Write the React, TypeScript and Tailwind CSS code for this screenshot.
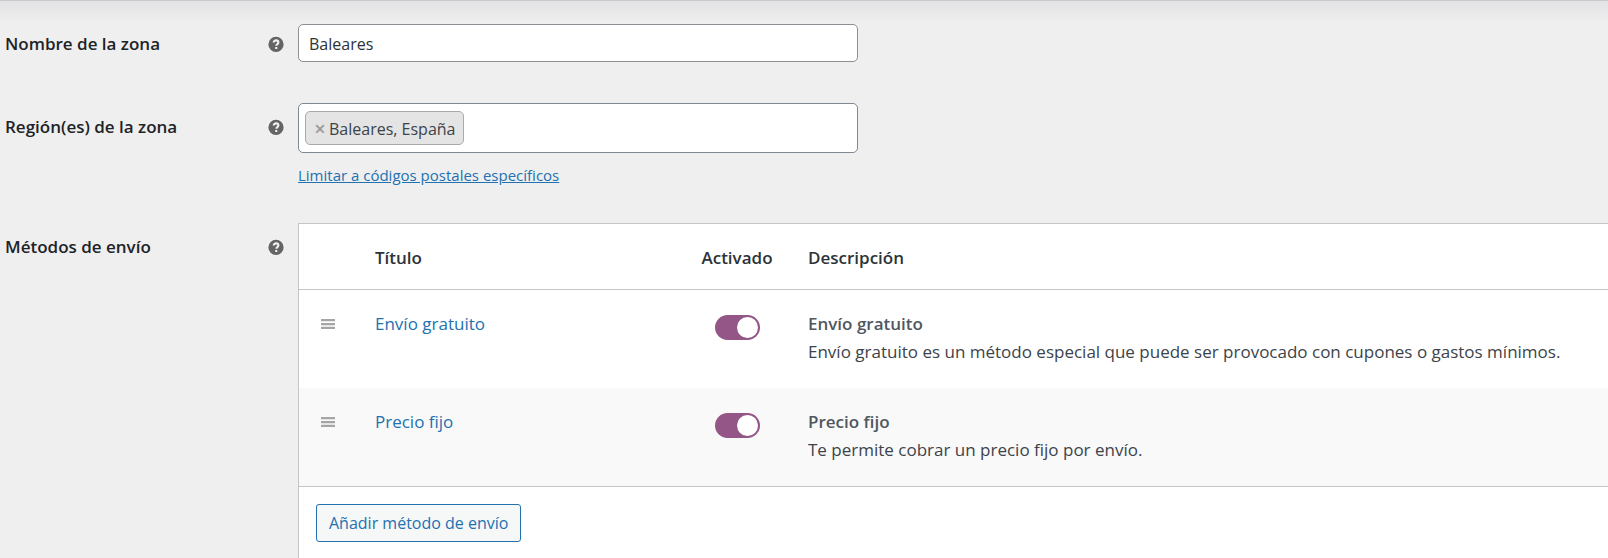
import { useState, type ReactNode } from "react";

const methods = [
  {
    id: "free_shipping",
    title: "Envío gratuito",
    description: "Envío gratuito es un método especial que puede ser provocado con cupones o gastos mínimos.",
  },
  {
    id: "flat_rate",
    title: "Precio fijo",
    description: "Te permite cobrar un precio fijo por envío.",
  },
];

function HelpIcon() {
  return (
    <svg viewBox="0 0 16 16" className="size-4 shrink-0" role="img" aria-label="Ayuda">
      <circle cx="8" cy="8.4" r="7.6" fill="#646464" />
      <path d="M5.7 6.6c0-1.4 1-2.2 2.4-2.2s2.3.8 2.3 2c0 1.7-2.1 1.6-2.1 3.3" fill="none" stroke="#f0f0f1" strokeWidth="2.1" />
      <rect x="7.2" y="11" width="2.1" height="2" fill="#f0f0f1" />
    </svg>
  );
}

function DragHandle() {
  return (
    <svg viewBox="0 0 14 10" className="h-[10px] w-[14px]" fill="#a5a5a5" aria-hidden="true">
      <path d="M0 0h14v2.3H0zM0 3.9h14v2.3H0zM0 7.7h14V10H0z" />
    </svg>
  );
}

type FieldRowProps = { label: string; htmlFor?: string; compact?: boolean; children: ReactNode };

function FieldRow({ label, htmlFor, compact, children }: FieldRowProps) {
  return (
    <div className="flex items-start">
      <div
        className={`flex w-[298px] shrink-0 items-center justify-between pr-[14px] pl-[5px] text-[17px] leading-6 font-semibold text-[#1d2327] ${compact ? "pt-2" : "pt-3"}`}
      >
        {htmlFor ? <label htmlFor={htmlFor}>{label}</label> : <span>{label}</span>}
        <HelpIcon />
      </div>
      <div className="min-w-0 flex-1">{children}</div>
    </div>
  );
}

function Toggle({ label }: { label: string }) {
  return (
    <input
      type="checkbox"
      role="switch"
      aria-label={label}
      defaultChecked
      className="block h-[25px] w-[45px] cursor-pointer appearance-none rounded-full bg-[#999] p-[2px] before:block before:size-[21px] before:rounded-full before:bg-white checked:bg-[#935687] checked:before:ml-5"
    />
  );
}

function MethodsTable() {
  return (
    <div className="border-t border-l border-[#c3c4c7] bg-white">
      <table className="w-full table-fixed border-collapse text-left text-[17px] leading-7">
        <thead>
          <tr className="h-[65px] border-b border-[#c3c4c7] text-[#2c3338]">
            <th className="w-[76px]" aria-label="Orden" />
            <th className="w-[304px] pt-1 font-semibold">Título</th>
            <th className="w-[116px] pt-1 text-center font-semibold">Activado</th>
            <th className="pt-1 pl-[13px] font-semibold">Descripción</th>
          </tr>
        </thead>
        <tbody className="border-b border-[#c3c4c7]">
          {methods.map((m) => (
            <tr key={m.id} className="align-top even:bg-[#f9f9f9]">
              <td className="pt-[29px] pl-[22px]">
                <DragHandle />
              </td>
              <td className="pt-5">
                <a href={`#${m.id}`} className="text-[#2271b1]">
                  {m.title}
                </a>
              </td>
              <td className="pt-[25px]">
                <div className="flex justify-center">
                  <Toggle label={m.title} />
                </div>
              </td>
              <td className="pt-5 pb-[22px] pl-[13px]">
                <strong className="block font-semibold text-[#50575e]">{m.title}</strong>
                <p className="text-[#3c434a]">{m.description}</p>
              </td>
            </tr>
          ))}
        </tbody>
      </table>
      <div className="px-[17px] pt-[17px] pb-4">
        <button type="button" className="h-[38px] rounded-[3px] border border-[#2271b1] bg-[#f6f7f7] px-3 text-[16px] text-[#2271b1]">
          Añadir método de envío
        </button>
      </div>
    </div>
  );
}

export default function App() {
  const [name, setName] = useState("Baleares");

  return (
    <main className="min-h-screen bg-[#efefef] font-['Open_Sans','Segoe_UI',sans-serif]">
      <div className="h-6 border-t border-[#c9c9cc] bg-linear-to-b from-[#e3e3e6] to-[#efefef]" />
      <form onSubmit={(e) => e.preventDefault()}>
        <FieldRow label="Nombre de la zona" htmlFor="zone-name" compact>
          <input
            id="zone-name"
            value={name}
            onChange={(e) => setName(e.target.value)}
            className="block h-[38px] w-full max-w-[560px] rounded-[5px] border border-[#8c8f94] bg-white px-[10px] pt-[2px] text-[16px] text-[#2c3338]"
          />
        </FieldRow>

        <div className="mt-[41px]">
          <FieldRow label="Región(es) de la zona" htmlFor="zone-regions">
            <div className="flex h-[50px] w-full max-w-[560px] items-center rounded-[5px] border border-[#7e8993] bg-white px-[6px]">
              <span className="flex h-[34px] shrink-0 items-center gap-[3px] rounded-[5px] border border-[#aaa] bg-[#e4e4e4] px-2 pt-[2px] text-[16px] text-[#3c434a]">
                <button type="button" aria-label="Quitar Baleares, España" className="w-3 text-[20px] leading-6 font-semibold text-[#999]">
                  ×
                </button>
                Baleares, España
              </span>
              <input id="zone-regions" className="min-w-0 flex-1 bg-transparent px-2 outline-none" />
            </div>
            <a href="#postcodes" className="mt-[10px] block w-fit text-[15px] leading-6 text-[#2271b1] underline">
              Limitar a códigos postales específicos
            </a>
          </FieldRow>
        </div>

        <div className="mt-9">
          <FieldRow label="Métodos de envío">
            <MethodsTable />
          </FieldRow>
        </div>
      </form>
    </main>
  );
}
